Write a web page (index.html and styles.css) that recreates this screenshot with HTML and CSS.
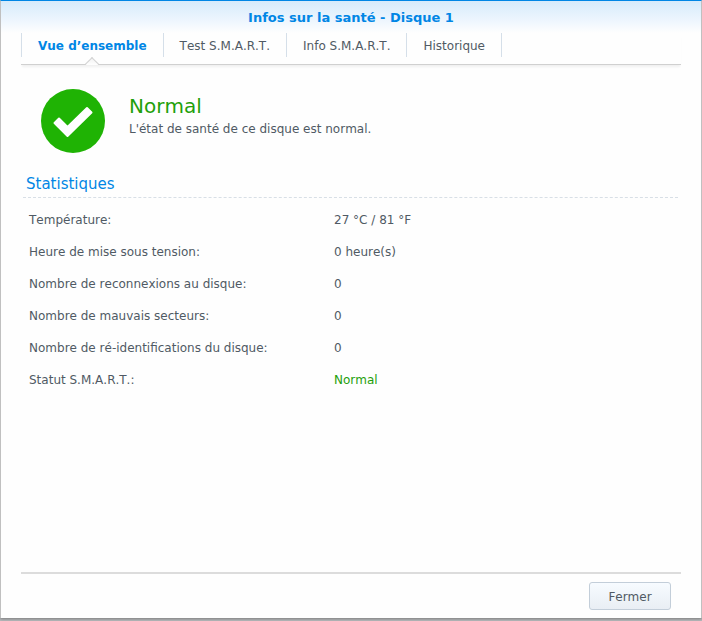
FILE: index.html
```html
<!DOCTYPE html>
<html lang="fr">
<head>
    <meta charset="UTF-8" />
    <meta name="viewport" content="width=device-width, initial-scale=1.0" />
    <title>Infos sur la santé - Disque 1</title>
    <link rel="stylesheet" href="styles.css">
</head>
<body>

<div class="window">
    <h1 class="title">Infos sur la santé - Disque 1</h1>

    <div class="tabs" role="tablist">
        <button class="tab active" role="tab" aria-selected="true">Vue d’ensemble</button>
        <button class="tab" role="tab">Test S.M.A.R.T.</button>
        <button class="tab" role="tab">Info S.M.A.R.T.</button>
        <button class="tab" role="tab">Historique</button>
    </div>

    <div class="content">
        <div class="health">
            <svg class="health-icon" width="64" height="64" viewBox="0 0 64 64" aria-hidden="true">
                <circle cx="32" cy="32" r="32" fill="#1fb304" />
                <path d="M18 29.500L26.500 38L46 19L50.500 23.500L26.500 47L13.500 34Z" fill="#fff" stroke="#fff" stroke-width="2" stroke-linejoin="round" />
            </svg>
            <div>
                <div class="health-status">Normal</div>
                <div class="health-text">L'état de santé de ce disque est normal.</div>
            </div>
        </div>

        <h2 class="section-title">Statistiques</h2>
        <table class="stats">
            <tr><th scope="row">Température:</th><td>27 °C / 81 °F</td></tr>
            <tr><th scope="row">Heure de mise sous tension:</th><td>0 heure(s)</td></tr>
            <tr><th scope="row">Nombre de reconnexions au disque:</th><td>0</td></tr>
            <tr><th scope="row">Nombre de mauvais secteurs:</th><td>0</td></tr>
            <tr><th scope="row">Nombre de ré-identifications du disque:</th><td>0</td></tr>
            <tr><th scope="row">Statut S.M.A.R.T.:</th><td class="good">Normal</td></tr>
        </table>
    </div>

    <div class="footer">
        <button class="btn">Fermer</button>
    </div>
</div>

</body>
</html>
```

FILE: styles.css
```css
* {
    box-sizing: border-box;
}

body {
    margin: 0;
    padding-bottom: 3px;
    min-height: 100vh;
    display: flex;
    background-color: #b9bcbf;
    font-family: Verdana, "DejaVu Sans", sans-serif;
    font-size: 12px;
    font-kerning: none;
    line-height: 16px;
    color: #505a64;
}

button {
    font: inherit;
    font-kerning: none;
    color: inherit;
    cursor: pointer;
}

.window {
    flex: 1;
    display: flex;
    flex-direction: column;
    padding: 0 20px;
    border: 1px solid #c0c0c0;
    border-top-color: #0086e5;
    border-bottom: none;
    background: #fefefe linear-gradient(#d6ebfb, #eef6fe 20px, #fefefe 32px) no-repeat;
    box-shadow: 0 1px 3px #777;
}

.title {
    margin: 0;
    padding: 9px 0 7px;
    font-size: 13px;
    text-align: center;
    color: #0086e5;
}

.tabs {
    display: flex;
    height: 32px;
    padding-bottom: 7px;
    border-bottom: 1px solid #d0d0d0;
    box-shadow: 0 3px 2px -1px #f0f0f0;
}

.tab {
    position: relative;
    padding: 2px 16px 0;
    border: none;
    border-right: 1px solid #d5dfe9;
    background: none;
}

.tab:first-child {
    border-left: 1px solid #d5dfe9;
}

.tab.active {
    font-weight: bold;
    color: #0086e5;
}

/* pointer cut into the line under the tabs */
.tab.active::after {
    content: "";
    position: absolute;
    left: 50%;
    bottom: -12px;
    width: 9px;
    height: 9px;
    margin-left: -5px;
    border: 1px solid #d0d0d0;
    border-right: none;
    border-bottom: none;
    background: linear-gradient(135deg, #f2f2f2, #fefefe 50%, transparent 50%);
    transform: rotate(45deg);
}

.content {
    flex: 1;
    padding: 24px 3px 24px 2px;
}

.health {
    display: flex;
    gap: 24px;
    padding-left: 18px;
}

.health-status {
    padding: 3px 0 1px;
    font-size: 20px;
    line-height: 28px;
    color: #1fa00a;
}

.section-title {
    margin: 21px 0 6px;
    padding: 0 3px 2px;
    border-bottom: 1px dashed #d8dfe6;
    font-size: 15px;
    font-weight: normal;
    line-height: 21px;
    color: #0086e5;
}

.stats {
    width: 100%;
    border-collapse: collapse;
}

.stats th,
.stats td {
    height: 32px;
    padding: 0 6px;
    font-weight: normal;
    text-align: left;
}

.stats th {
    width: 305px;
}

.stats .good {
    color: #1fa00a;
}

.footer {
    display: flex;
    justify-content: flex-end;
    padding: 8px 10px;
    border-top: 2px solid #dcdcdc;
}

.btn {
    height: 28px;
    min-width: 82px;
    padding-top: 2px;
    border: 1px solid #c3ced9;
    border-radius: 3px;
    background: linear-gradient(#f7fbff, #e9eef4);
}
```
